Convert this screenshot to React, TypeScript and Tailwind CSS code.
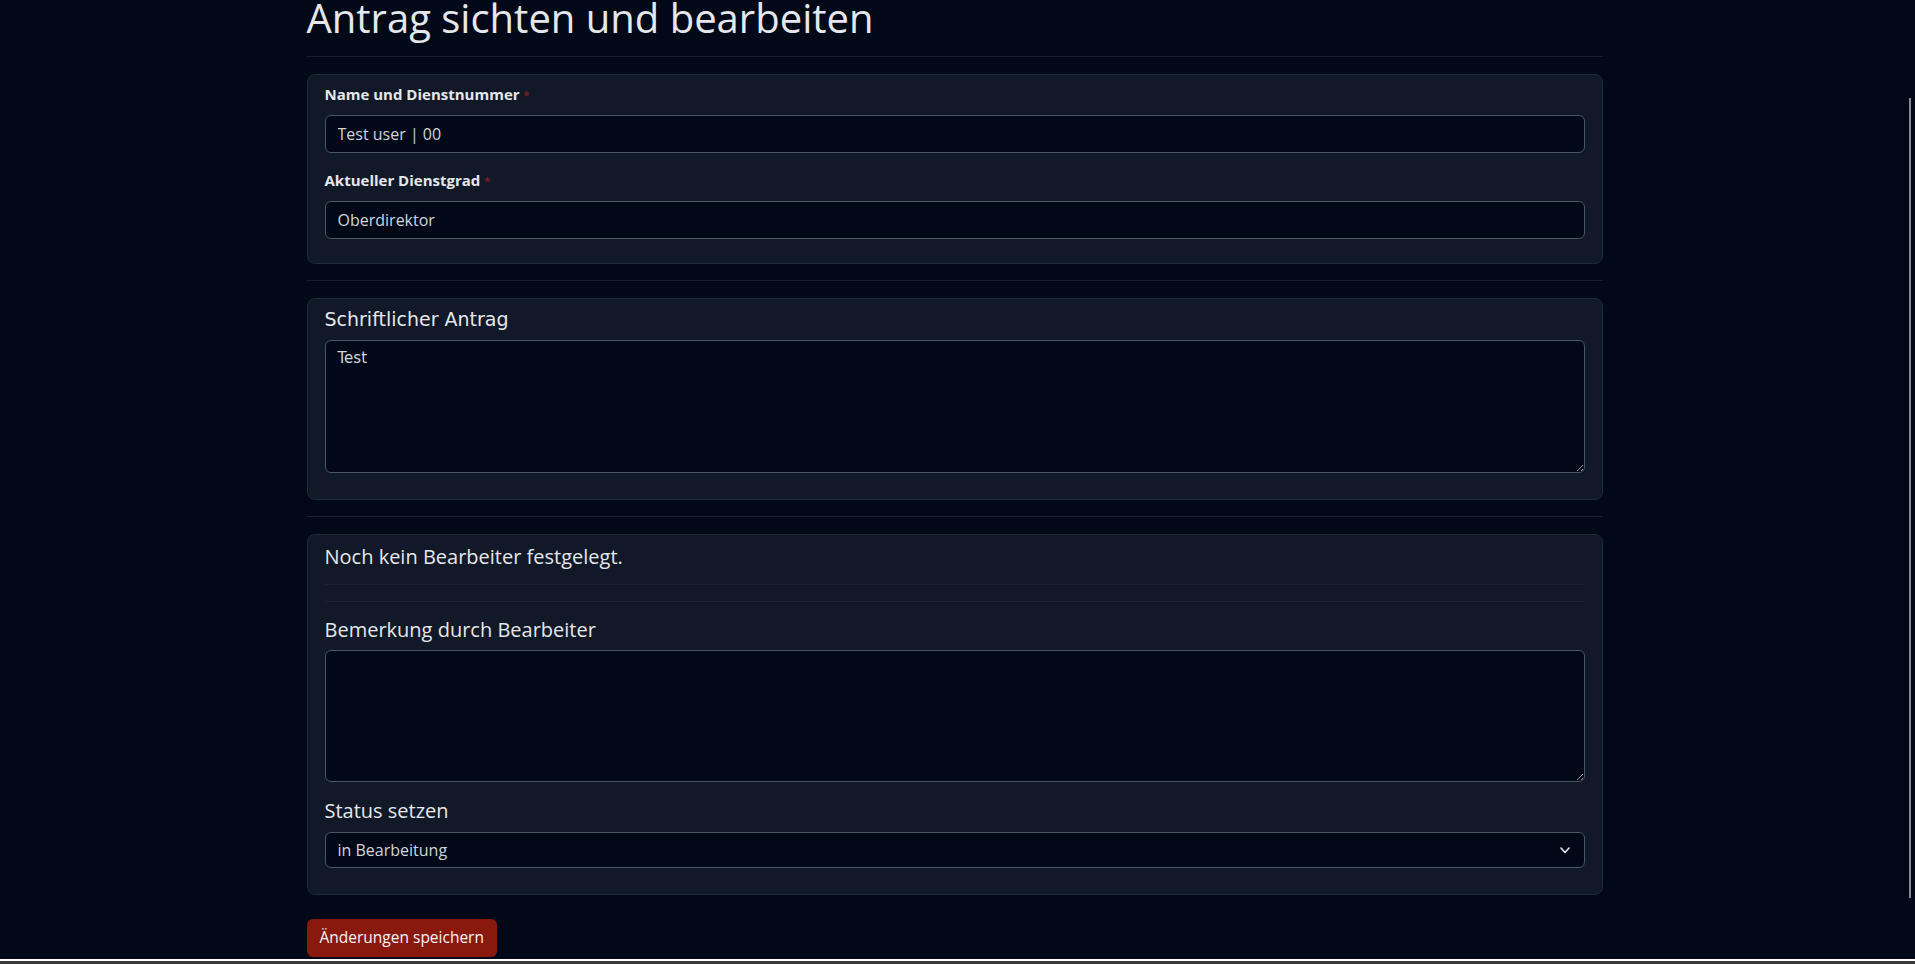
const font = { fontFamily: "'Open Sans', 'Noto Sans', sans-serif" };
const dejavu = { fontFamily: "'DejaVu Sans', sans-serif" };

const Label = ({ children }: { children: React.ReactNode }) => (
  <label className="block text-[15px] font-bold leading-[21px] text-[#e5e7eb] mb-[10px]">
    {children} <span className="text-[#7f1d1d] text-[11px] align-top">*</span>
  </label>
);

const inputClass =
  "block w-full h-[38px] rounded-[6px] border border-[#4b5563] bg-[#010818] px-[12px] text-[16px] text-[#d1d5db] outline-none";

const App = () => {
  return (
    <div className="min-h-[964px] bg-[#010818] text-[#e5e7eb] pr-[6px]" style={font}>
      <div className="w-[1296px] mx-auto">
        <h1 className="text-[40px] leading-[46px] -mt-[5px] pb-[15px] text-[#e5e7eb] border-b border-[#1a1f2b]">
          Antrag sichten und bearbeiten
        </h1>

        <div className="mt-[17px] rounded-[8px] border border-[#1f2937] bg-[#111827] px-[17px] pt-[9px] pb-[24px]">
          <Label>Name und Dienstnummer</Label>
          <input className={inputClass} style={font} defaultValue="Test user | 00" />
          <div className="mt-[17px]">
            <Label>Aktueller Dienstgrad</Label>
            <input className={inputClass} style={font} defaultValue="Oberdirektor" />
          </div>
        </div>

        <div className="mt-[16px] border-t border-[#1a1f2b]" />

        <div className="mt-[17px] rounded-[8px] border border-[#1f2937] bg-[#111827] px-[17px] pt-[8px] pb-[26px]">
          <h3 className="text-[19px] leading-[24px] mb-[9px] text-[#e5e7eb]" style={dejavu}>
            Schriftlicher Antrag
          </h3>
          <textarea
            className="block w-full h-[133px] rounded-[6px] border border-[#4b5563] bg-[#010818] px-[12px] py-[6px] text-[15px] text-[#d1d5db] outline-none"
            style={dejavu}
            defaultValue="Test"
          />
        </div>

        <div className="mt-[16px] border-t border-[#1a1f2b]" />

        <div className="mt-[17px] rounded-[8px] border border-[#1f2937] bg-[#111827] px-[17px] pt-[10px] pb-[26px]">
          <p className="text-[20px] leading-[24px] text-[#e5e7eb]">Noch kein Bearbeiter festgelegt.</p>
          <div className="mt-[15px] border-t border-[#1c2230]" />
          <div className="mt-[16px] border-t border-[#1c2230]" />
          <h3 className="mt-[16px] text-[20px] leading-[24px] mb-[8px] text-[#e5e7eb]">Bemerkung durch Bearbeiter</h3>
          <textarea className="block w-full h-[132px] rounded-[6px] border border-[#4b5563] bg-[#010818] px-[12px] py-[6px] text-[16px] text-[#d1d5db] outline-none" />
          <h3 className="mt-[17px] text-[20px] leading-[24px] mb-[9px] text-[#e5e7eb]">Status setzen</h3>
          <div className="relative">
            <select
              className="block w-full h-[36px] appearance-none rounded-[6px] border border-[#4b5563] bg-[#010818] px-[12px] text-[16px] text-[#d1d5db] outline-none"
              style={font}
            >
              <option>in Bearbeitung</option>
            </select>
            <svg
              className="absolute right-[15px] top-[15px] pointer-events-none"
              width="10"
              height="7"
              viewBox="0 0 10 7"
              fill="none"
              stroke="#e5e7eb"
              strokeWidth="1.6"
              strokeLinecap="round"
              strokeLinejoin="round"
            >
              <polyline points="1,1 5,5.5 9,1" />
            </svg>
          </div>
        </div>

        <button
          className="mt-[24px] h-[38px] rounded-[6px] bg-[#8a190d] px-[13px] text-[15.5px] text-[#f3f4f6]"
          style={font}
        >
          Änderungen speichern
        </button>
      </div>
      <div className="fixed right-[4px] top-[98px] w-[2px] h-[800px] bg-[#8a8a8a]" />
      <div className="fixed bottom-0 left-0 right-0 h-[3px] bg-[#3a3a3a]" />
    </div>
  );
};

export default App;
